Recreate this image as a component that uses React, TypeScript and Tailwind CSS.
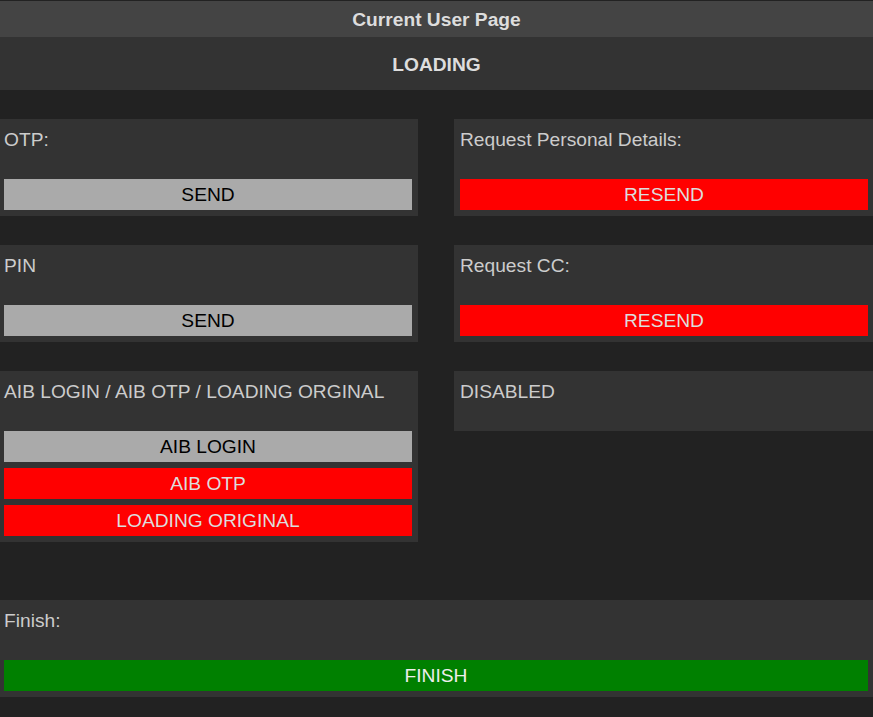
import React from "react";

type Btn = { label: string; tone: "gray" | "red" | "green" };

const toneClass: Record<Btn["tone"], string> = {
  gray: "bg-[#aaaaaa] text-black",
  red: "bg-[#ff0000] text-[#dddddd]",
  green: "bg-[#008000] text-[#eeeeee]",
};

const Card = ({
  title,
  buttons,
  className,
}: {
  title: string;
  buttons: Btn[];
  className: string;
}) => (
  <div className={`bg-[#333333] pt-[6px] ${className}`}>
    <div className="h-[54px] pt-px text-[19.2px] leading-[28px] text-[#cccccc]">{title}</div>
    {buttons.length > 0 && (
      <div className="flex flex-col gap-[6px] pb-[6px]">
        {buttons.map((b) => (
          <button
            key={b.label}
            className={`h-[31px] w-full text-[19.2px] leading-[31px] text-center ${toneClass[b.tone]}`}
          >
            {b.label}
          </button>
        ))}
      </div>
    )}
  </div>
);

export default function App() {
  return (
    <div className="min-h-[717px] bg-[#222222] pt-px font-['Liberation_Sans',Arial,sans-serif]">
      <div className="h-[36px] bg-[#444444] pt-[2px] text-center text-[19.2px] font-bold leading-[34px] text-[#dddddd]">
        Current User Page
      </div>
      <div className="h-[53px] bg-[#333333] pt-[2px] text-center text-[19.2px] font-bold leading-[51px] text-[#dddddd]">
        LOADING
      </div>

      <div className="mt-[29px] grid grid-cols-[418px_419px] gap-x-[36px] gap-y-[29px] items-start">
        <Card
          title="OTP:"
          buttons={[{ label: "SEND", tone: "gray" }]}
          className="pl-[4px] pr-[6px]"
        />
        <Card
          title="Request Personal Details:"
          buttons={[{ label: "RESEND", tone: "red" }]}
          className="pl-[6px] pr-[5px]"
        />
        <Card
          title="PIN"
          buttons={[{ label: "SEND", tone: "gray" }]}
          className="pl-[4px] pr-[6px]"
        />
        <Card
          title="Request CC:"
          buttons={[{ label: "RESEND", tone: "red" }]}
          className="pl-[6px] pr-[5px]"
        />
        <Card
          title="AIB LOGIN / AIB OTP / LOADING ORGINAL"
          buttons={[
            { label: "AIB LOGIN", tone: "gray" },
            { label: "AIB OTP", tone: "red" },
            { label: "LOADING ORIGINAL", tone: "red" },
          ]}
          className="pl-[4px] pr-[6px]"
        />
        <Card title="DISABLED" buttons={[]} className="pl-[6px] pr-[5px]" />
      </div>

      <div className="mt-[58px] pb-[20px]">
        <Card
          title="Finish:"
          buttons={[{ label: "FINISH", tone: "green" }]}
          className="pl-[4px] pr-[5px]"
        />
      </div>
    </div>
  );
}
